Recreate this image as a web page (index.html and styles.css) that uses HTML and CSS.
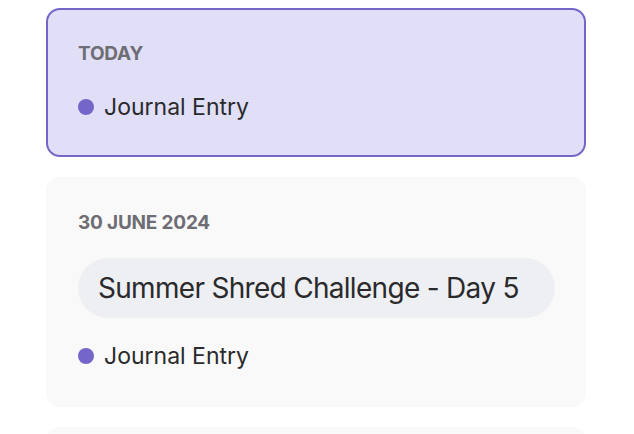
FILE: index.html
```html
<!DOCTYPE html>
<html lang="en">
<head>
<meta charset="utf-8">
<title>Journal</title>
<link rel="stylesheet" href="styles.css">
</head>
<body>
<main class="list">
  <section class="day-card day-card--today">
    <h2 class="day-label">TODAY</h2>
    <div class="entry-row">
      <span class="dot"></span>
      <span class="entry-text">Journal Entry</span>
    </div>
  </section>
  <section class="day-card">
    <h2 class="day-label">30 JUNE 2024</h2>
    <div class="pill">Summer Shred Challenge - Day 5</div>
    <div class="entry-row">
      <span class="dot"></span>
      <span class="entry-text">Journal Entry</span>
    </div>
  </section>
  <section class="day-card">
    <h2 class="day-label">29 JUNE 2024</h2>
    <div class="entry-row">
      <span class="dot"></span>
      <span class="entry-text">Journal Entry</span>
    </div>
  </section>
</main>
</body>
</html>
```
FILE: styles.css
```css
* { box-sizing: border-box; }
html, body { margin: 0; padding: 0; background: #ffffff; }
body {
  font-family: "Inter", "Noto Sans", "Liberation Sans", sans-serif;
  color: #2a2a2c;
}
.list {
  width: 540px;
  margin: 8px 0 0 46px;
  display: flex;
  flex-direction: column;
  gap: 20px;
}
.day-card {
  background: #f9f9f9;
  border: 2px solid transparent;
  border-radius: 14px;
  padding: 32px 30px 34px;
  display: flex;
  flex-direction: column;
  gap: 23px;
}
.day-card--today {
  background: #e1dff7;
  border-color: #7466c9;
  gap: 26px;
  padding-bottom: 33px;
}
.day-label {
  margin: 0;
  font-size: 19px;
  line-height: 24px;
  font-weight: 700;
  color: #6e6d74;
  letter-spacing: -0.2px;
}
.entry-row {
  display: flex;
  align-items: center;
  gap: 10px;
  height: 30px;
}
.dot {
  width: 16px;
  height: 16px;
  border-radius: 50%;
  background: #7466c9;
  flex: none;
}
.entry-text {
  font-size: 23px;
  line-height: 30px;
  color: #2a2a2c;
}
.pill {
  align-self: flex-start;
  white-space: nowrap;
  height: 60px;
  line-height: 60px;
  padding: 0 36px 0 20px;
  border-radius: 30px;
  background: #eeeff3;
  font-size: 28px;
  color: #2a2a2c;
  letter-spacing: -0.7px;
}
```
